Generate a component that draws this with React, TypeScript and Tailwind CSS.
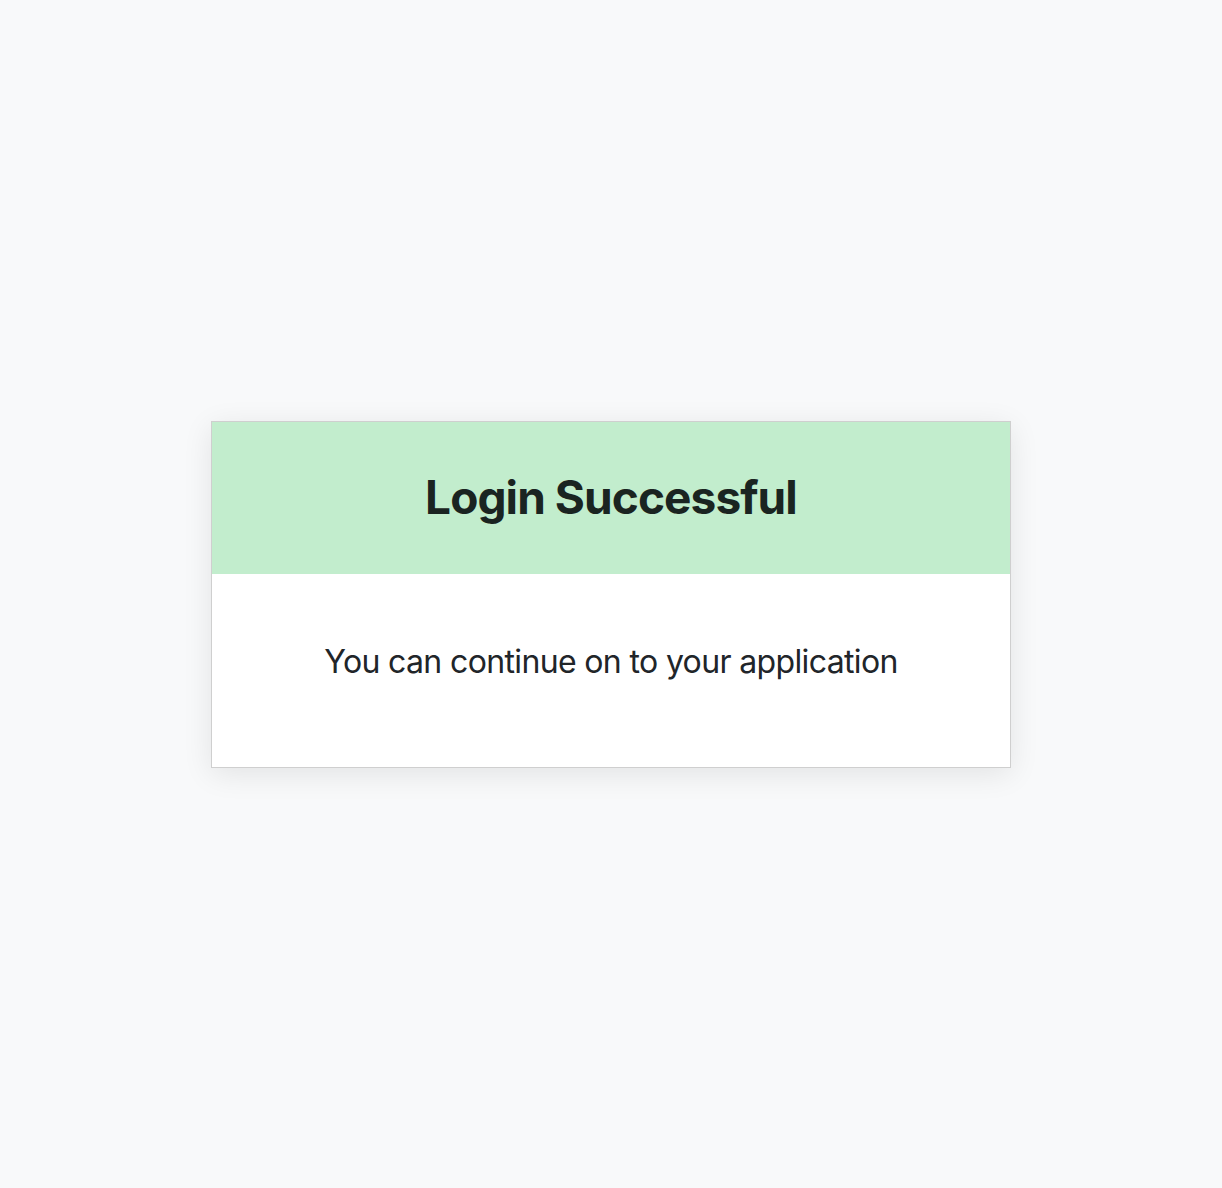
export default function App() {
  return (
    <div
      className="flex min-h-[1188px] items-center justify-center bg-[#f8f9fa]"
      style={{ fontFamily: "Inter, 'Noto Sans', sans-serif" }}
    >
      <div className="w-[800px] border border-[#cfcfcf] bg-white shadow-[0_6px_28px_rgba(0,0,0,0.09)]">
        <div className="flex h-[152px] items-center justify-center bg-[#c2edcd]">
          <h1 className="text-[46px] font-bold leading-[1.2] tracking-[-0.02em] text-[#1a2421]">Login Successful</h1>
        </div>
        <div className="flex h-[193px] items-start justify-center pt-[64px]">
          <p className="text-[32px] leading-[1.5] tracking-[-0.02em] text-[#212529]">You can continue on to your application</p>
        </div>
      </div>
    </div>
  );
}
